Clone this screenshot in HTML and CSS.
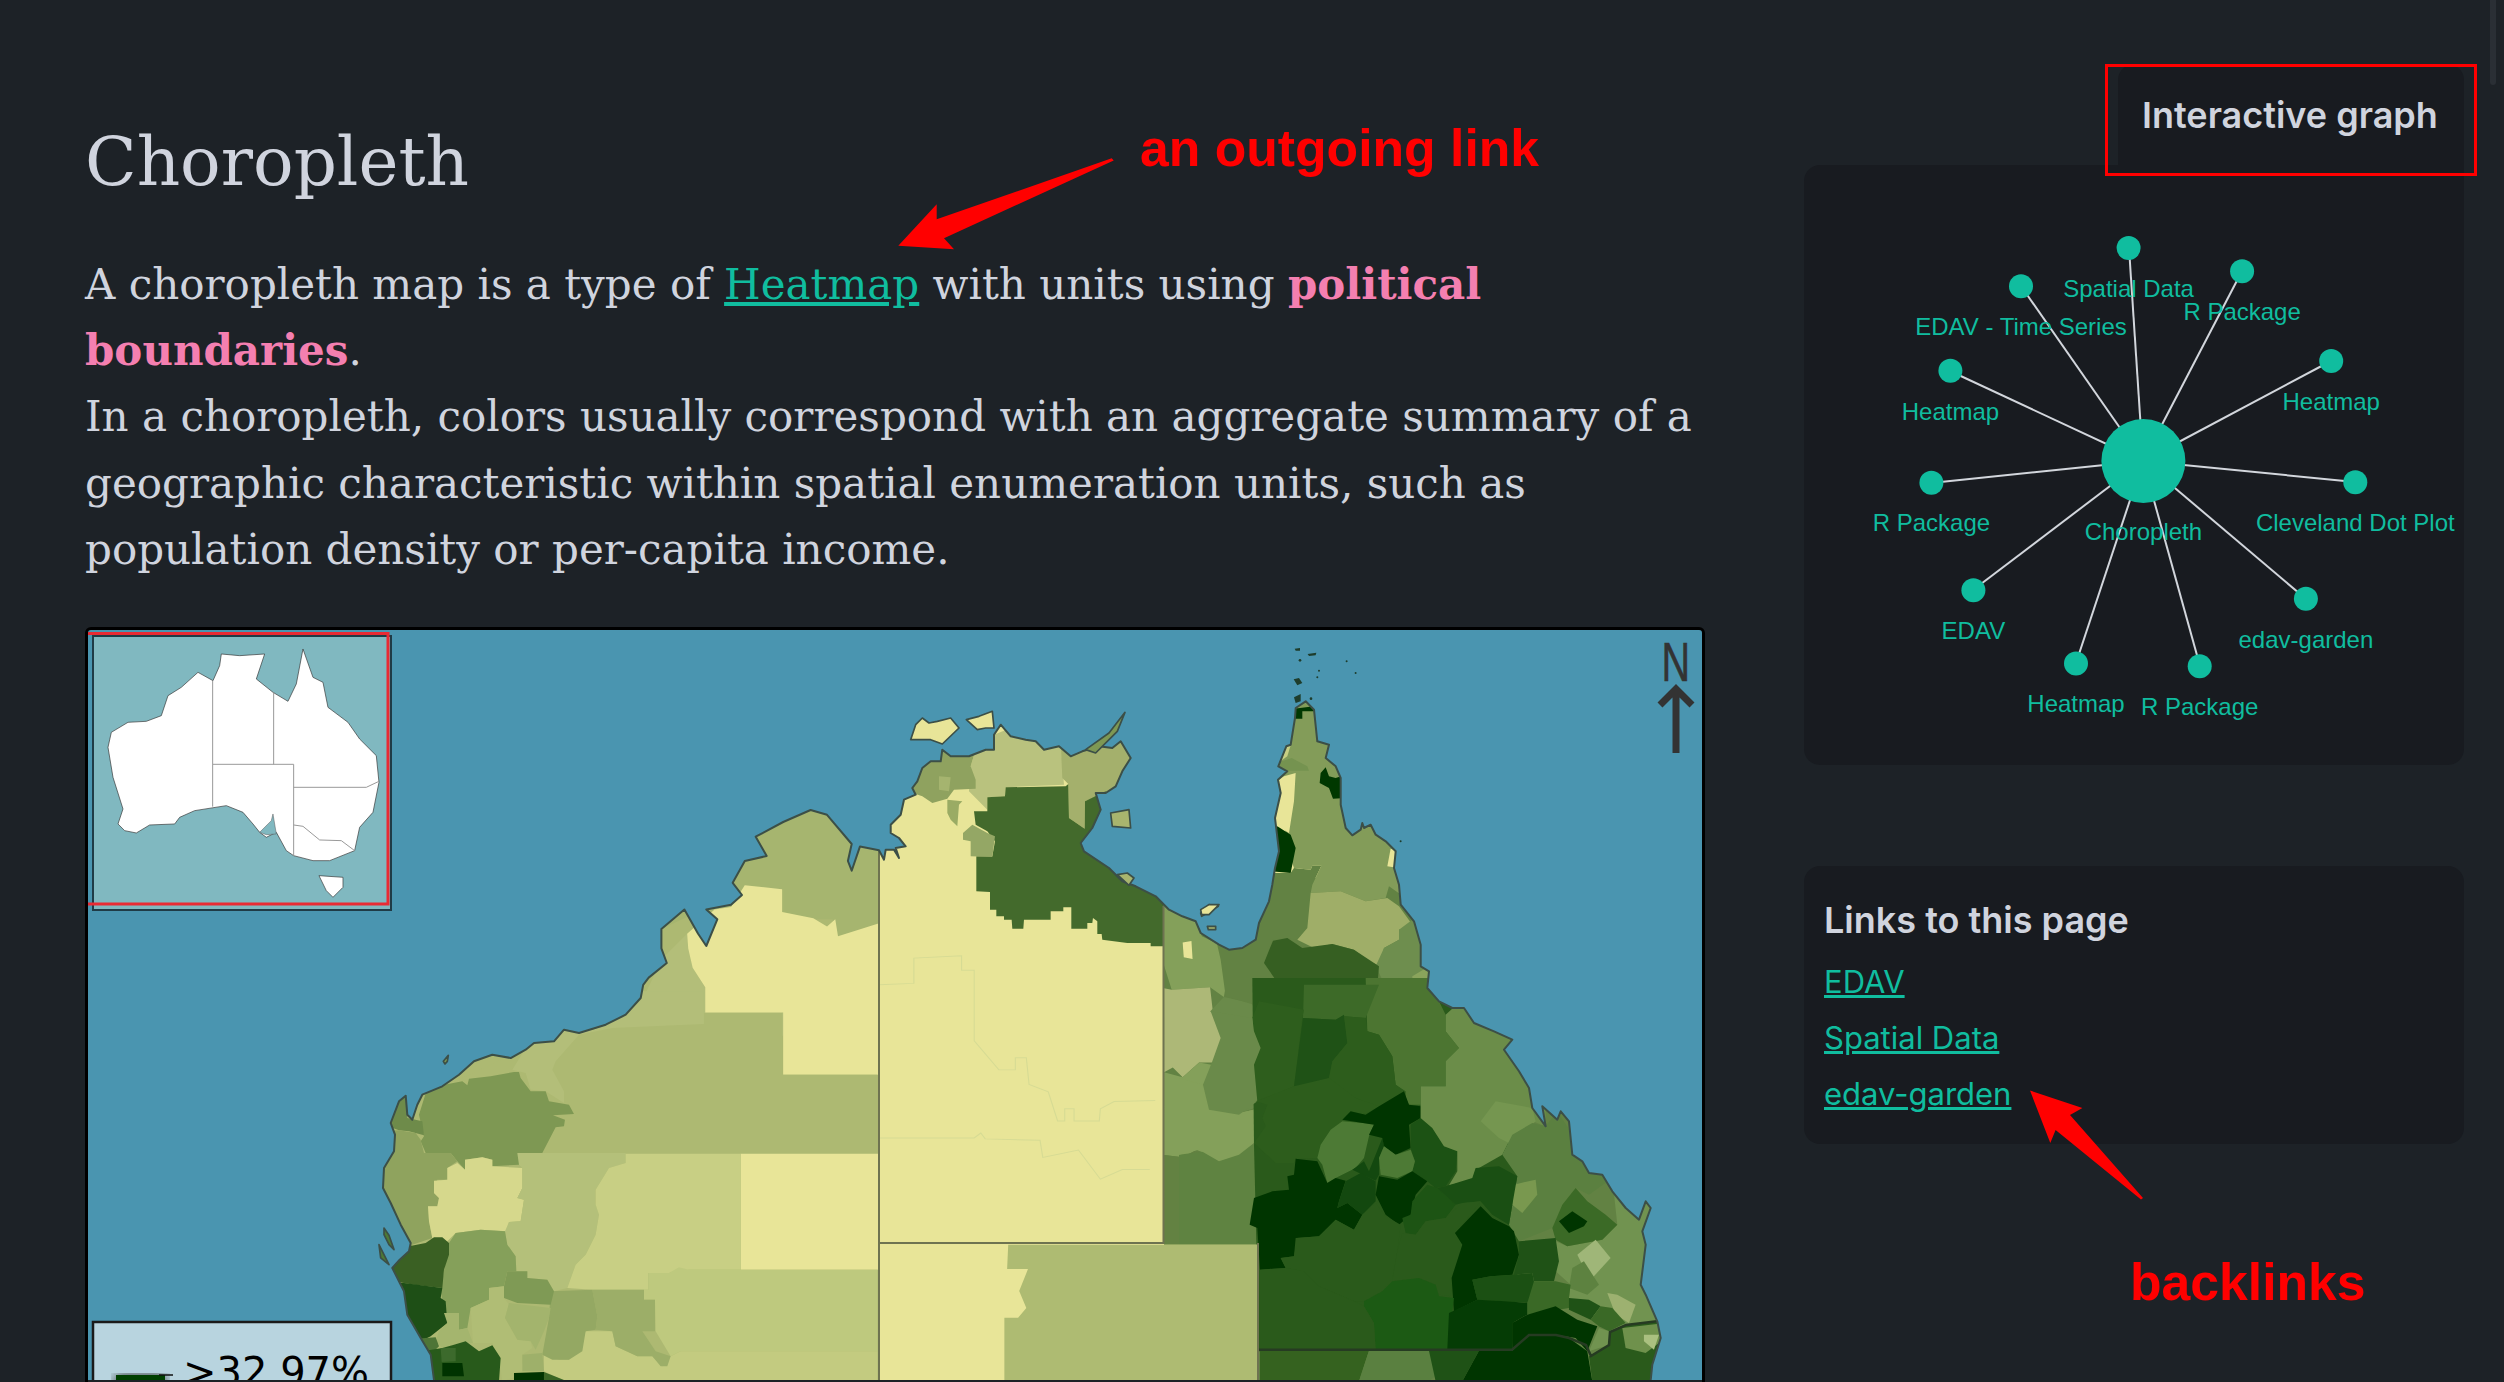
FILE: index.html
```html
<!DOCTYPE html>
<html lang="en">
<head>
    <meta charset="UTF-8">
    <meta name="viewport" content="width=device-width, initial-scale=1.0">
    <title>Choropleth</title>
    <link rel="stylesheet" href="styles.css">
</head>
<body>
    <div class="page">
        <main class="note">
            <h1>Choropleth</h1>
            <p class="intro">A choropleth map is a type of <a href="#">Heatmap</a> with units using <strong>political boundaries</strong>.<br>In a choropleth, colors usually correspond with an aggregate summary of a geographic characteristic within spatial enumeration units, such as population density or per-capita income.</p>

            <div class="map">
                <svg class="map-svg" viewBox="89 632 1614 750" width="1614" height="750">
                    <defs>
                        <clipPath id="land">
                            <path id="coast" d="M435 1382L431.7 1356.7 421.7 1340 408.3 1316.7 405 1293.3 393.3 1270 400.7 1261.7 410 1253.3 411.7 1245 401.7 1226.7 391.7 1205 384 1190 385 1170 395 1153.3 396 1136.7 391.7 1125 400 1103.3 406.7 1097.7 408.3 1116.7 413.3 1121.7 418.3 1106.7 423.3 1096.7 443.3 1088.3 460 1076.7 475 1063.3 493.3 1056.7 511.7 1060 526.7 1051.7 535 1045 555 1043.3 565 1031.7 580 1035 606.7 1026.7 626.7 1016.7 641.7 1000 644.2 986.9 649.7 979.6 667.8 965 662.4 950.4 662.4 931 685.4 911.5 699.1 935.8 707.3 948 718.3 921.3 707.3 911.5 732 906.7 743 897 733.7 884.8 745.8 863 767.7 858 756.7 838.7 784.2 824 811.6 812 828 816.8 852.7 846 848.9 863 852.7 872.7 861 848.4 880 852.3 885 861.7 886.7 851.7 895 851.7 900 860 896.7 850 906.7 848.3 900 840 891.7 835 891.7 826.7 901.7 816.7 905 801.7 916.7 796.7 913.3 790 918.3 783.3 923.3 770 931.7 763.3 941.7 763.3 943.3 751.7 951.7 758.3 970 758.3 986.7 751.7 995 751.7 995 736.7 1001.7 726.7 1011.7 738.3 1026.7 741.7 1036.7 743.3 1045 751.7 1060 748.3 1071.7 758.3 1083.3 753.3 1100 748.3 1113.3 750 1121.7 743.3 1131.7 760 1123.3 773.3 1116.7 788.3 1106.7 795 1096.7 795 1101.7 811.7 1093.3 830 1081.7 845 1085 853.3 1110 870 1123.3 883.3 1136.7 888.3 1156.7 898.3 1170 911.7 1183.3 918.3 1196.7 923.3 1201.7 935 1220 946.7 1230 951.7 1243.3 950 1256.7 941.7 1260 925 1270 903.3 1273.3 886.7 1276 870 1280 853.3 1276 820 1281.7 795 1279 781.7 1288.3 773.3 1279.3 768.3 1287.3 748.3 1291.7 746.7 1296 720 1296.7 710 1306.7 703.3 1315 711.7 1318.3 743.3 1330 746.7 1326.7 760 1336.7 768.3 1341.7 780 1341.7 806.7 1346.7 830 1353.3 837.3 1361.7 831.7 1363.3 825 1365 830 1371.7 826.7 1376.7 836.7 1386.7 843.3 1396.7 853.3 1395 870 1400 886.7 1401.7 906.7 1415 923.3 1421.7 946.7 1421.7 968.3 1430 973.3 1428.3 990 1440 1003.3 1453.3 1010 1465 1010 1475 1025 1495 1033.3 1513.3 1041.7 1505 1051.7 1520 1073.3 1530 1090 1533.3 1110 1546.7 1128.3 1543.3 1108.3 1558.3 1121.7 1561.7 1113.3 1570 1123.3 1573.3 1156.7 1583.3 1163.3 1590 1175 1603.3 1176.7 1613.3 1193.3 1626.7 1210 1640 1221.7 1646.7 1203.3 1651.7 1210 1643.3 1233.3 1646.7 1246.7 1641.7 1286.7 1646.7 1296.7 1658.3 1323.3 1661.7 1340 1653.3 1366.7 1651.7 1382 1651.7 1400 435 1400Z"/>
                        </clipPath>
                        <filter id="swatch-blur"><feGaussianBlur stdDeviation="6"/></filter>
                    </defs>

                    <rect class="sea" x="89" y="632" width="1614" height="750"/>
                    <use href="#coast" class="land-base"/>

                    <g clip-path="url(#land)">
                        <!-- base tints under the regions -->
                        <rect fill="#adb972" x="370" y="800" width="510" height="600"/>
                        <rect fill="#628243" x="1165" y="880" width="540" height="520"/>

                        <!-- north west -->
                        <g transform="translate(60 620) scale(.5486 .4859)">
                            <polygon fill="#a6b56f" points="1098,640 1250,560 1320,558 1320,605 1375,620 1410,620 1420,655 1495,630 1495,380 1370,380 1200,480 1090,600"/>
                            <polygon fill="#b3be79" points="1040,840 1100,700 1145,650 1155,720 1178,760 1178,812 1320,812 1320,860 1000,900"/>
                            <polygon fill="#e8e598" points="1145,650 1195,600 1225,595 1250,550 1318,558 1318,605 1375,618 1400,635 1415,620 1420,655 1495,628 1495,940 1320,940 1320,812 1178,812 1178,760 1155,720 1147,680"/>
                        </g>
                        <!-- western australia -->
                        <g transform="translate(380 1000) scale(.3333)">
                            <polygon fill="#adb972" points="250,240 440,150 590,90 700,60 780,-10 975,-10 975,45 1210,45 1210,230 1495,230 1495,465 500,465 400,400"/>
                            <polygon fill="#e8e598" points="1085,467 1500,467 1500,815 1085,815"/>
                            <polygon fill="#b3be79" points="780,-20 975,-20 975,78 700,90 600,110 530,190 520,215 555,280 555,315 500,280 455,275 440,225 400,215 440,150"/>
                            <polygon fill="#7e9853" points="130,395 120,350 145,270 250,250 265,262 270,242 335,235 405,222 420,222 425,240 455,280 500,280 510,310 570,320 585,348 522,352 558,365 555,385 530,388 490,465 420,465 420,500 340,505 340,485 310,478 258,485 258,515 235,490 215,465 140,465 125,430 135,415"/>
                            <polygon fill="#6e8b4a" points="0,375 60,280 85,280 85,360 130,370 135,412 90,400 60,397"/>
                            <polygon fill="#8fa35e" points="60,397 110,405 125,425 135,465 215,465 235,490 205,510 205,545 175,545 165,585 180,600 175,625 147,625 150,670 160,720 100,740 80,790 0,640 0,400"/>
                            <polygon fill="#d6d88c" points="205,510 235,495 258,515 258,485 310,478 340,485 340,505 430,510 430,570 415,600 435,605 425,670 390,672 385,700 305,695 230,705 205,730 160,720 150,670 147,625 175,625 180,600 165,585 165,548 205,545"/>
                            <polygon fill="#b4c07a" points="415,465 740,465 740,495 690,510 650,575 650,620 660,650 650,710 620,770 590,800 565,870 525,880 505,845 445,840 445,820 412,820 410,775 385,740 378,700 390,672 425,670 435,605 415,600 430,570 430,510 420,500"/>
                            <polygon fill="#c8cf84" points="690,510 740,495 740,467 1085,467 1085,815 930,815 870,825 808,825 808,875 640,875 565,870 590,800 620,770 650,710 660,650 650,620 650,575"/>
                            <polygon fill="#bec97e" points="808,825 870,825 900,808 930,815 1496,815 1496,1060 905,1060 875,1075 830,1000 828,905 795,905 795,875 808,875"/>
                            <polygon fill="#c3cb80" points="495,1070 540,1085 570,1085 620,1000 700,1000 710,1045 775,1075 820,1075 850,1105 875,1075 905,1060 1496,1060 1496,1150 560,1150 495,1120"/>
                            <polygon fill="#9cae68" points="640,875 795,875 795,905 828,905 828,1000 790,1000 830,1060 875,1075 865,1105 845,1105 820,1075 775,1075 710,1045 700,1000 650,995 655,955"/>
                            <polygon fill="#94a863" points="515,880 640,875 655,955 650,995 620,1000 610,1060 570,1085 520,1085 490,1070 500,1015 510,960"/>
                            <polygon fill="#85a05a" points="210,735 230,705 305,695 378,700 385,740 410,775 412,820 385,820 375,865 330,870 330,905 275,930 265,990 240,995 240,945 195,945 185,875 200,790 210,760"/>
                            <polygon fill="#7f9a55" points="385,820 445,820 445,840 505,845 525,880 515,920 415,915 375,900 375,865"/>
                            <polygon fill="#3a6023" points="0,770 90,745 140,735 165,718 190,718 210,735 210,770 195,815 190,870 105,860 75,855 40,850"/>
                            <polygon fill="#1e4f16" points="40,855 75,855 190,870 185,900 200,910 205,975 155,1015 125,1030 60,950"/>
                            <polygon fill="#a4b56e" points="195,945 240,945 240,995 265,990 282,1035 225,1040 190,1050 170,1030 180,1000 205,975"/>
                            <polygon fill="#b0bd75" points="275,930 330,905 330,870 375,865 375,900 390,920 378,960 415,1025 455,1030 460,1050 430,1070 430,1095 460,1120 370,1150 360,1080 340,1035 282,1035"/>
                            <polygon fill="#a3b46d" points="390,915 515,930 510,960 495,1000 470,1055 455,1030 415,1025 378,960"/>
                            <polygon fill="#9eb06a" points="430,1070 490,1065 495,1120 430,1120"/>
                            <polygon fill="#4e7537" points="110,1022 170,1018 180,1045 160,1065 130,1060"/>
                            <polygon fill="#285a1b" points="130,1060 190,1050 225,1040 260,1030 300,1060 340,1042 365,1080 360,1150 130,1150"/>
                            <polygon fill="#3c6a2c" points="185,1050 230,1050 230,1090 188,1092"/>
                            <polygon fill="#003300" points="190,1095 250,1095 255,1135 190,1135"/>
                            <polygon fill="#003300" points="405,1125 495,1122 495,1150 405,1150"/>
                            <polygon fill="#3a6625" points="495,1122 555,1146 495,1150"/>
                        </g>
                        <!-- top end -->
                        <g transform="translate(880 680) scale(.3333)">
                            <polygon fill="#b9c27e" points="275,265 290,215 345,170 395,150 545,190 555,320 380,328 378,355 325,358 325,395 270,340"/>
                            <polygon fill="#a4b06c" points="545,190 780,190 780,320 665,350 618,370 617,452 570,420 568,318 550,300"/>
                            <polygon fill="#436a2c" points="325,358 378,355 380,328 560,325 568,318 570,420 617,452 618,370 680,340 700,400 605,495 640,520 730,600 855,650 855,805 815,805 815,795 745,795 670,785 668,768 655,768 655,730 642,720 640,735 625,735 625,752 577,752 577,688 553,688 553,700 515,700 515,725 435,725 433,752 400,752 398,725 375,725 375,715 352,715 352,695 333,695 333,642 292,640 292,535 340,535 348,490 325,460 290,440 285,400 325,400"/>
                            <polygon fill="#94a765" points="252,465 280,440 325,465 348,475 340,537 275,535 275,490 252,485"/>
                            <polygon fill="#8fa25f" points="85,340 130,250 175,205 220,215 290,215 275,265 290,305 290,332 225,335 205,362 160,375 130,355"/>
                            <polygon fill="#a5b46f" points="180,295 215,298 210,340 180,335"/>
                            <polygon fill="#9aab64" points="205,365 250,370 240,380 235,445 215,425 205,405"/>
                        </g>
                        <!-- gulf and cape -->
                        <g transform="translate(860 620) scale(.5486 .4859)">
                            <polygon fill="#84a05a" points="555,580 610,610 625,655 680,685 665,780 640,760 570,765 556,715"/>
                            <polygon fill="#adb877" points="556,762 570,765 640,760 645,810 660,815 660,860 670,880 655,915 620,915 590,945 572,925 556,935"/>
                            <polygon fill="#84a05a" points="556,935 590,945 620,915 645,920 630,965 650,1010 690,1020 745,1005 725,1075 660,1115 615,1095 590,1110 556,1105"/>
                            <polygon fill="#638242" points="556,1105 590,1110 615,1095 660,1115 700,1090 795,1125 780,1180 725,1200 712,1240 728,1290 556,1290"/>
                            <polygon fill="#6a8a4a" points="665,780 725,795 720,820 735,860 730,910 725,990 745,1000 690,1020 650,1010 630,965 645,920 670,880 660,820 640,810"/>
                            <polygon fill="#e8e598" points="590,668 606,665 608,702 592,698"/>
                        </g>
                        <g transform="translate(1200 640) scale(.3333)">
                            <polygon fill="#628243" points="200,705 275,705 285,690 335,695 340,683 367,683 340,740 335,765 325,870 295,905 265,900 220,905 195,975 240,1040 245,1090 180,1105 80,1075 65,965 50,900 130,900 170,880 180,800"/>
                            <polygon fill="#839c59" points="290,160 370,190 380,310 440,420 450,520 480,560 515,530 610,640 620,780 570,745 560,780 500,790 425,760 335,765 340,740 367,683 340,683 335,695 285,690 275,660 230,430 220,400 220,385 250,300"/>
                            <polygon fill="#9fae68" points="335,765 425,760 500,790 565,780 600,805 640,860 600,875 600,905 555,930 545,985 510,970 465,935 400,918 345,930 295,905 325,870"/>
                            <polygon fill="#6e8e4e" points="600,875 660,830 690,920 690,985 640,1020 600,1025 550,1025 530,985 555,930 600,905"/>
                            <polygon fill="#8aa45c" points="640,1015 690,985 720,1000 710,1060 740,1110 690,1115 640,1060"/>
                            <polygon fill="#365f22" points="222,908 265,900 310,930 400,918 465,935 540,985 530,1110 250,1110 240,1040 195,975"/>
                            <polygon fill="#e8e598" points="255,415 290,405 285,490 270,585 232,560 210,515 230,465 230,430"/>
                            <polygon fill="#003800" points="235,565 275,590 290,630 275,705 215,700 225,640 215,590"/>
                            <polygon fill="#003800" points="380,388 390,415 410,420 440,410 440,480 402,482 390,450 362,435 365,405"/>
                            <polygon fill="#003800" points="270,242 285,212 345,205 350,220 310,220 310,242"/>
                            <polygon fill="#e8e598" points="575,632 600,640 598,690 565,685"/>
                            <polygon fill="#c8cf84" points="250,320 275,322 265,355 230,380"/>
                            <polygon fill="#759350" points="278,360 325,385 330,398 268,398 220,380"/>
                        </g>
                        <!-- queensland -->
                        <g transform="translate(1180 1000) scale(.3333)">
                            <polygon fill="#5f8341" points="0,470 230,440 300,490 350,480 350,740 0,740"/>
                            <polygon fill="#84a05a" points="0,240 70,260 90,330 180,345 250,330 260,385 225,435 180,470 120,490 60,455 0,470"/>
                            <polygon fill="#2a5a1b" points="220,-60 1020,-60 1020,760 1000,1060 240,1060 225,440"/>
                            <polygon fill="#4c7531" points="560,-60 760,-60 780,10 800,50 800,100 840,150 800,190 800,265 725,265 725,320 690,320 670,275 650,260 640,175 600,110 565,100"/>
                            <polygon fill="#3d6a28" points="375,-40 600,-40 560,60 495,55 470,65 372,60"/>
                            <polygon fill="#2e5e1d" points="240,10 375,35 370,60 345,265 290,290 235,310 225,200 245,150 225,100 220,60"/>
                            <polygon fill="#6a8a4a" points="95,40 220,60 225,100 245,150 225,200 235,310 180,350 90,335 72,260 100,190 125,120"/>
                            <polygon fill="#1f5216" points="372,60 470,65 495,50 505,135 460,190 450,240 385,270 345,265"/>
                            <polygon fill="#2d5d1c" points="495,55 560,60 565,100 600,110 640,175 650,260 680,280 680,310 600,330 530,300 460,270 450,240 460,190 505,135"/>
                            <polygon fill="#2d5d1c" points="345,265 450,240 530,300 600,325 565,345 495,360 580,380 550,440 440,500 415,480 350,482 345,495 290,495 225,435 260,385 250,360 265,320 230,310"/>
                            <polygon fill="#4d7a35" points="425,440 455,395 490,370 585,378 570,415 555,480 530,510 470,540 445,555 430,500 415,480"/>
                            <polygon fill="#13480f" points="570,520 610,420 615,445 600,480 600,530 590,548 520,515 555,490"/>
                            <polygon fill="#003500" points="600,325 675,280 690,320 725,325 725,360 690,380 695,450 650,470 615,445 610,420 570,410 585,380 490,365 515,340 560,350"/>
                            <polygon fill="#1c5214" points="695,380 725,360 760,390 795,445 835,460 830,520 800,565 770,570 745,550 700,520 708,490 695,450"/>
                            <polygon fill="#4d7a35" points="615,445 650,470 695,455 708,490 700,520 655,540 605,530 600,480"/>
                            <polygon fill="#6b8d49" points="800,50 855,0 905,50 1100,100 1100,385 1060,370 1000,410 970,470 900,510 885,545 810,562 835,520 835,460 795,445 760,390 725,360 725,265 800,265 800,190 840,150 800,100"/>
                            <polygon fill="#759650" points="905,370 950,310 1060,330 1070,370 1000,440 960,420"/>
                            <polygon fill="#5b8040" points="970,470 1000,410 1060,375 1100,385 1135,340 1220,470 1250,520 1300,540 1230,590 1190,570 1150,620 1120,690 1020,730 990,680 1000,620 1015,535"/>
                            <polygon fill="#79984f" points="1000,620 1005,560 1070,545 1075,590 1030,645"/>
                            <polygon fill="#719350" points="1130,730 1165,745 1270,725 1315,680 1300,540 1440,610 1440,970 1340,980 1290,1000 1240,950 1170,900 1175,860 1130,820"/>
                            <polygon fill="#3b6a26" points="1150,620 1190,570 1225,610 1280,650 1315,680 1270,725 1165,745 1130,725 1120,690"/>
                            <polygon fill="#003500" points="1140,670 1180,640 1225,670 1215,685 1170,705"/>
                            <polygon fill="#1f5216" points="1020,730 1130,720 1140,790 1125,850 1065,850 1060,825 1005,830 1020,770"/>
                            <polygon fill="#9fb678" points="1195,770 1250,725 1295,780 1240,840 1210,800"/>
                            <polygon fill="#5d8240" points="1180,810 1215,790 1260,860 1225,890 1170,870"/>
                            <polygon fill="#3a6926" points="1045,850 1130,850 1175,860 1170,900 1170,930 1045,950"/>
                            <polygon fill="#1f5216" points="1170,900 1230,905 1265,925 1235,965 1170,935"/>
                            <polygon fill="#9db170" points="1285,885 1315,890 1370,920 1350,975 1310,950"/>
                            <polygon fill="#3a6926" points="1235,965 1265,925 1300,930 1340,975 1290,1000 1260,985"/>
                            <polygon fill="#003500" points="350,482 415,490 445,555 470,540 500,548 480,610 475,630 505,615 550,650 525,695 470,665 420,715 355,720 345,775 305,780 320,810 243,815 235,690 212,680 225,600 280,580 330,575 325,535 345,530"/>
                            <polygon fill="#13480f" points="500,550 545,525 590,550 590,610 550,650 505,615 475,630 480,610"/>
                            <polygon fill="#003500" points="600,535 655,545 700,520 745,550 710,590 695,650 660,680 620,650 590,590"/>
                            <polygon fill="#1d5414" points="700,610 745,560 775,570 830,620 800,660 740,670 710,710 680,705 670,660 695,650"/>
                            <polygon fill="#1a4f13" points="775,570 800,565 880,540 890,510 960,505 1015,535 1000,620 990,680 940,650 905,610 850,615 830,620"/>
                            <polygon fill="#2a5a1b" points="350,720 420,715 470,665 525,695 550,650 590,615 620,655 665,680 655,760 640,840 610,880 555,910 525,910 420,865 375,820 320,810 305,780 345,775"/>
                            <polygon fill="#2a5a1b" points="670,705 710,710 740,670 800,660 850,615 905,610 835,700 855,740 840,800 820,850 815,895 780,890 770,860 720,840 640,850 655,760"/>
                            <polygon fill="#003500" points="905,625 940,660 990,685 1005,700 1020,770 1000,830 935,835 880,845 895,905 825,940 818,840 850,740 828,705"/>
                            <polygon fill="#1b5013" points="880,845 935,835 1005,830 1060,825 1065,850 1045,915 980,910 895,905"/>
                            <polygon fill="#1c5a14" points="555,910 610,880 640,850 720,840 770,860 780,895 825,900 805,1055 590,1055 585,975 555,925"/>
                            <polygon fill="#2a5a1b" points="243,815 320,810 375,820 420,865 525,910 555,925 585,975 590,1055 243,1055"/>
                            <polygon fill="#053c05" points="805,1055 810,945 895,905 980,910 1045,915 1045,950 1000,975 1000,1055"/>
                            <polygon fill="#003500" points="1000,975 1045,950 1130,925 1195,965 1255,985 1225,1060 1190,1020 1130,1010 1050,1010 1000,1055"/>
                            <polygon fill="#719350" points="1230,1060 1260,990 1290,1000 1295,1040 1260,1050"/>
                            <!-- nsw strip -->
                            <polygon fill="#35621f" points="243,1058 570,1058 540,1150 243,1150"/>
                            <polygon fill="#5a8040" points="570,1058 750,1058 780,1125 750,1150 540,1150"/>
                            <polygon fill="#1f5216" points="750,1058 900,1058 850,1150 770,1150"/>
                            <polygon fill="#003500" points="900,1058 1000,1058 1050,1010 1130,1010 1170,1020 1225,1060 1240,1150 850,1150"/>
                            <polygon fill="#2a5a1b" points="1230,1075 1290,1040 1295,1000 1340,980 1460,970 1460,1150 1240,1150"/>
                            <polygon fill="#6f914c" points="1330,990 1460,975 1460,1020 1400,1065 1340,1050"/>
                            <polygon fill="#aac080" points="1395,1010 1440,1010 1425,1055 1395,1030"/>
                        </g>
                        <!-- south australia -->
                        <g transform="translate(860 620) scale(.5486 .4859)">
                            <polygon fill="#e8e598" points="36,1290 728,1290 728,1568 36,1568"/>
                            <polygon fill="#aebb72" points="272,1290 728,1290 728,1568 265,1568 265,1440 290,1440 305,1420 292,1385 308,1340 270,1340"/>
                            <polyline class="faint" points="36,755 100,752 100,700 187,695 187,725 210,725 210,870 255,930 285,930 285,905 305,905 310,960 345,975 362,1035 375,1035 375,1010 392,1010 392,1035 438,1035 440,1010 465,995 540,993"/>
                            <polyline class="faint" points="35,1070 210,1070 222,1060 230,1072 330,1075 335,1110 400,1095 440,1155 480,1135 530,1135"/>
                        </g>
                        <!-- state lines -->
                        <path class="state-line" d="M880 850V1382M1164.5 908V1245H880M1259 1245V1382"/>
                        <path class="state-dark" d="M1260 1351.7H1513L1530 1337 1557 1337 1570 1340 1587 1347 1592 1358 1610 1347 1611 1334 1627 1327 1660 1323"/>
                    </g>

                    <use href="#coast" class="coast-line"/>

                    <!-- islands -->
                    <g transform="translate(880 680) scale(.3333)">
                        <polygon class="island" fill="#e8e598" points="95,185 110,140 130,120 150,135 175,130 215,120 240,150 190,198 155,185"/>
                        <polygon class="island" fill="#e8e598" points="262,125 300,115 340,100 345,150 320,150 295,155"/>
                        <polygon class="island" fill="#a8b56e" points="695,405 750,395 755,450 700,445"/>
                        <polygon class="island" fill="#7e9853" points="620,215 690,165 738,103 715,160 650,225"/>
                        <polygon class="island" fill="#a8b56e" points="715,590 745,585 765,600 750,622"/>
                        <polygon class="island" fill="#e8e598" points="965,705 990,680 1018,685 985,705 968,715"/>
                    </g>
                    <g transform="translate(1200 640) scale(.3333)">
                        <polygon class="islet" points="287,32 303,30 303,38 290,38"/>
                        <polygon class="islet" points="326,48 352,44 350,52 330,54"/>
                        <polygon class="islet" points="284,124 300,120 310,135 295,142"/>
                        <polygon class="islet" points="285,178 305,168 305,190 290,195"/>
                        <circle class="islet" cx="303" cy="67" r="4"/><circle class="islet" cx="360" cy="98" r="3"/><circle class="islet" cx="355" cy="118" r="3"/><circle class="islet" cx="443" cy="70" r="3"/><circle class="islet" cx="470" cy="105" r="3"/><circle class="islet" cx="605" cy="610" r="3"/><circle class="islet" cx="336" cy="182" r="4"/>
                        <polygon class="island" fill="#e8e598" points="5,815 30,800 60,800 30,830 8,830"/>
                        <polygon class="island" fill="#a8b56e" points="25,865 50,865 50,875 28,875"/>
                    </g>
                    <g transform="translate(380 1000) scale(.3333)">
                        <polygon class="island" fill="#4d7a35" points="15,690 30,712 45,755 30,740 15,710"/>
                        <polygon class="island" fill="#4d7a35" points="0,740 15,770 30,800 5,780"/>
                        <polygon class="island" fill="#7e9853" points="193,190 208,172 205,190 198,198"/>
                    </g>

                    <!-- north arrow -->
                    <text class="north" transform="translate(1662.5 683) scale(.72 1)">N</text>
                    <path class="north-arrow" d="M1677 755V691M1661 707L1677 691 1693 707"/>

                    <!-- inset -->
                    <rect class="inset-box" x="94" y="638" width="298" height="274"/>
                    <g transform="translate(84 626) scale(.3333)">
                        <path class="inset-land" d="M75 370L85 325 135 295 190 292 235 275 255 215 295 190 345 145 390 170 410 125 415 90 470 95 545 90 520 165 570 205 615 232 640 180 660 75 690 160 720 175 735 250 795 295 830 345 880 395 888 475 870 565 830 610 815 680 740 710 690 710 632 695 610 680 580 625 550 640 530 625 510 600 480 565 430 545 335 560 290 580 275 600 200 603 160 627 125 620 105 600 120 555 90 460Z"/>
                        <path class="inset-land" d="M708 755L780 760 780 790 750 820 730 800Z"/>
                        <path class="inset-water" d="M530 625L565 590 570 570 580 630 550 632Z"/>
                        <path class="inset-line" d="M389 170V548M390 421H632V695M572 205V421M632 490H795L850 490 888 472M632 603L660 607 710 648 775 650 815 680"/>
                    </g>
                    <path class="inset-red" d="M89 635.5H389V906H89"/>

                    <!-- legend -->
                    <rect class="legend-box" x="94" y="1324" width="298" height="70"/>
                    <rect class="swatch-shadow" x="117" y="1377" width="49" height="20" filter="url(#swatch-blur)"/>
                    <rect class="swatch" x="117" y="1377" width="49" height="10"/>
                    <path class="swatch-tick" d="M160 1377H174"/>
                    <text class="legend-text" x="184" y="1388">&gt;32.97%</text>
                </svg>
            </div>
        </main>

        <aside class="side">
            <div class="graph-tab">Interactive graph</div>
            <div class="card graph-card">
                <svg class="graph" viewBox="0 0 659 600" width="659" height="600">
                    <g class="links">
                        <line x1="339" y1="296" x2="325" y2="83"/>
                        <line x1="339" y1="296" x2="438" y2="106"/>
                        <line x1="339" y1="296" x2="527" y2="196"/>
                        <line x1="339" y1="296" x2="551" y2="317"/>
                        <line x1="339" y1="296" x2="502" y2="434"/>
                        <line x1="339" y1="296" x2="396" y2="501"/>
                        <line x1="339" y1="296" x2="272" y2="498"/>
                        <line x1="339" y1="296" x2="169" y2="425"/>
                        <line x1="339" y1="296" x2="127" y2="318"/>
                        <line x1="339" y1="296" x2="146" y2="206"/>
                        <line x1="339" y1="296" x2="217" y2="121"/>
                    </g>
                    <g class="nodes">
                        <circle cx="339.4" cy="296" r="42"/>
                        <circle cx="324.6" cy="83.1" r="12"/>
                        <circle cx="438.1" cy="106.2" r="12"/>
                        <circle cx="527.2" cy="195.9" r="12"/>
                        <circle cx="551.3" cy="317.2" r="12"/>
                        <circle cx="501.9" cy="433.8" r="12"/>
                        <circle cx="395.7" cy="501.2" r="12"/>
                        <circle cx="272" cy="498.4" r="12"/>
                        <circle cx="169.4" cy="425.3" r="12"/>
                        <circle cx="127.4" cy="317.7" r="12"/>
                        <circle cx="146.4" cy="205.8" r="12"/>
                        <circle cx="217" cy="121.3" r="12"/>
                    </g>
                    <g class="labels">
                        <text x="339.4" y="375">Choropleth</text>
                        <text x="324.6" y="132">Spatial Data</text>
                        <text x="438.1" y="155">R Package</text>
                        <text x="527.2" y="245">Heatmap</text>
                        <text x="551.3" y="366">Cleveland Dot Plot</text>
                        <text x="501.9" y="483">edav-garden</text>
                        <text x="395.7" y="550">R Package</text>
                        <text x="272" y="547">Heatmap</text>
                        <text x="169.4" y="474">EDAV</text>
                        <text x="127.4" y="366">R Package</text>
                        <text x="146.4" y="255">Heatmap</text>
                        <text x="217" y="170">EDAV - Time Series</text>
                    </g>
                </svg>
            </div>

            <div class="card backlinks">
                <h3>Links to this page</h3>
                <ul>
                    <li><a href="#">EDAV</a></li>
                    <li><a href="#">Spatial Data</a></li>
                    <li><a href="#">edav-garden</a></li>
                </ul>
            </div>
        </aside>
    </div>

    <!-- red annotations drawn over the screenshot -->
    <span class="note-label label-outgoing">an outgoing link</span>
    <span class="note-label label-backlinks">backlinks</span>
    <div class="red-box"></div>
    <div class="scroll-thumb"></div>
    <svg class="arrows" viewBox="0 0 2504 1382" width="2504" height="1382">
        <polygon points="1111.7,158.3 1113.7,160.5 944,238.3 954,249.3 898.3,245.7 936.7,204.3 936.7,219.3"/>
        <polygon points="2030,1090.5 2082.4,1108 2070,1115 2143,1198 2141,1199.5 2055.6,1130 2050.3,1143"/>
    </svg>
</body>
</html>
```

FILE: styles.css
```css
:root {
    --bg: #1d2227;
    --card: #181b20;
    --text: #d0d4de;
    --teal: #10bd9f;
    --pink: #f47fb0;
    --red: #ff0000;
}

html, body {
    margin: 0;
    height: 100%;
}

body {
    background-color: var(--bg);
    color: var(--text);
    font-family: 'DejaVu Serif', serif;
    overflow: hidden;
    position: relative;
}

.page {
    display: flex;
    align-items: flex-start;
    padding-left: 85px;
}

/* note column */
.note {
    width: 1620px;
    padding-top: 114px;
    flex-shrink: 0;
}

h1 {
    font-size: 67.5px;
    font-weight: 400;
    line-height: 96px;
    margin: 0 0 42px 0;
}

.intro {
    font-size: 42px;
    line-height: 66.2px;
    margin: 0 0 44px 0;
}

.intro a {
    color: var(--teal);
}

.intro strong {
    color: var(--pink);
    font-weight: 700;
}

.map {
    border: 3px solid #000;
    border-radius: 6px;
    overflow: hidden;
    line-height: 0;
    height: 760px;
}

.map-svg {
    display: block;
}

.sea { fill: #4a95b0; }
.land-base { fill: #e8e598; }
.coast-line { fill: none; stroke: #3c4f47; stroke-width: 2; stroke-linejoin: round; }
.state-line { fill: none; stroke: #6e7350; stroke-width: 2; }
.state-dark { fill: none; stroke: #263b22; stroke-width: 2.5; }
.faint { fill: none; stroke: #d6db94; stroke-width: 2; }
.island { stroke: #3c4f47; stroke-width: 5; stroke-linejoin: round; }
.islet { fill: #1e3d2c; }

.north { font-family: 'Liberation Sans', sans-serif; font-size: 55px; fill: #333; stroke: #333; stroke-width: .6; }
.north-arrow { fill: none; stroke: #333; stroke-width: 7; }

.inset-box { fill: #80b8c0; stroke: #1f3b46; stroke-width: 2; }
.inset-land { fill: #fff; stroke: #333; stroke-width: 2; }
.inset-water { fill: #80b8c0; stroke: #555; stroke-width: 1.5; }
.inset-line { fill: none; stroke: #999; stroke-width: 3; }
.inset-red { fill: none; stroke: #e92a33; stroke-width: 3; }

.legend-box { fill: #b8d4df; stroke: #1a1a1a; stroke-width: 2.5; }
.swatch-shadow { fill: #333; }
.swatch { fill: #004000; }
.swatch-tick { stroke: #111; stroke-width: 1.5; }
.legend-text { font-family: 'DejaVu Sans', sans-serif; font-size: 40px; fill: #000; }

/* sidebar */
.side {
    width: 660px;
    margin-left: 99px;
    padding-top: 64px;
    flex-shrink: 0;
    font-family: 'Inter', sans-serif;
    display: flex;
    flex-direction: column;
}

.graph-tab {
    align-self: flex-end;
    width: 346px;
    height: 101px;
    box-sizing: border-box;
    padding: 27px 0 0 24px;
    background-color: var(--card);
    border-radius: 16px 16px 0 0;
    font-size: 36px;
    font-weight: 600;
    line-height: 48px;
}

.card {
    background-color: var(--card);
    border-radius: 16px;
}

.graph-card {
    height: 600px;
    border-top-right-radius: 0;
}

.graph {
    display: block;
}

.links line {
    stroke: #d2d6dc;
    stroke-width: 2;
}

.nodes circle {
    fill: var(--teal);
}

.labels text {
    fill: var(--teal);
    font-family: 'Liberation Sans', sans-serif;
    font-size: 24px;
    text-anchor: middle;
}

.backlinks {
    margin-top: 101px;
    height: 278px;
    box-sizing: border-box;
    padding: 30px 20px;
}

.backlinks h3 {
    font-size: 36px;
    font-weight: 600;
    line-height: 48px;
    margin: 0 0 10px 0;
}

.backlinks ul {
    list-style: none;
    margin: 0;
    padding: 0;
}

.backlinks li {
    font-size: 31px;
    line-height: 56px;
}

.backlinks a {
    color: var(--teal);
}

/* annotations */
.note-label {
    position: absolute;
    color: var(--red);
    font-family: 'Liberation Sans', sans-serif;
    font-weight: 700;
    font-size: 51.7px;
    line-height: 60px;
}

.label-outgoing {
    left: 1140px;
    top: 118px;
}

.label-backlinks {
    left: 2130px;
    top: 1252px;
}

.red-box {
    position: absolute;
    left: 2105px;
    top: 64px;
    width: 366px;
    height: 106px;
    border: 3px solid var(--red);
}

.scroll-thumb {
    position: absolute;
    left: 2490px;
    top: 0;
    width: 6px;
    height: 85px;
    background-color: #2a2f35;
    border-radius: 0 0 3px 3px;
}

.arrows {
    position: absolute;
    left: 0;
    top: 0;
    pointer-events: none;
}

.arrows polygon {
    fill: var(--red);
}
```
